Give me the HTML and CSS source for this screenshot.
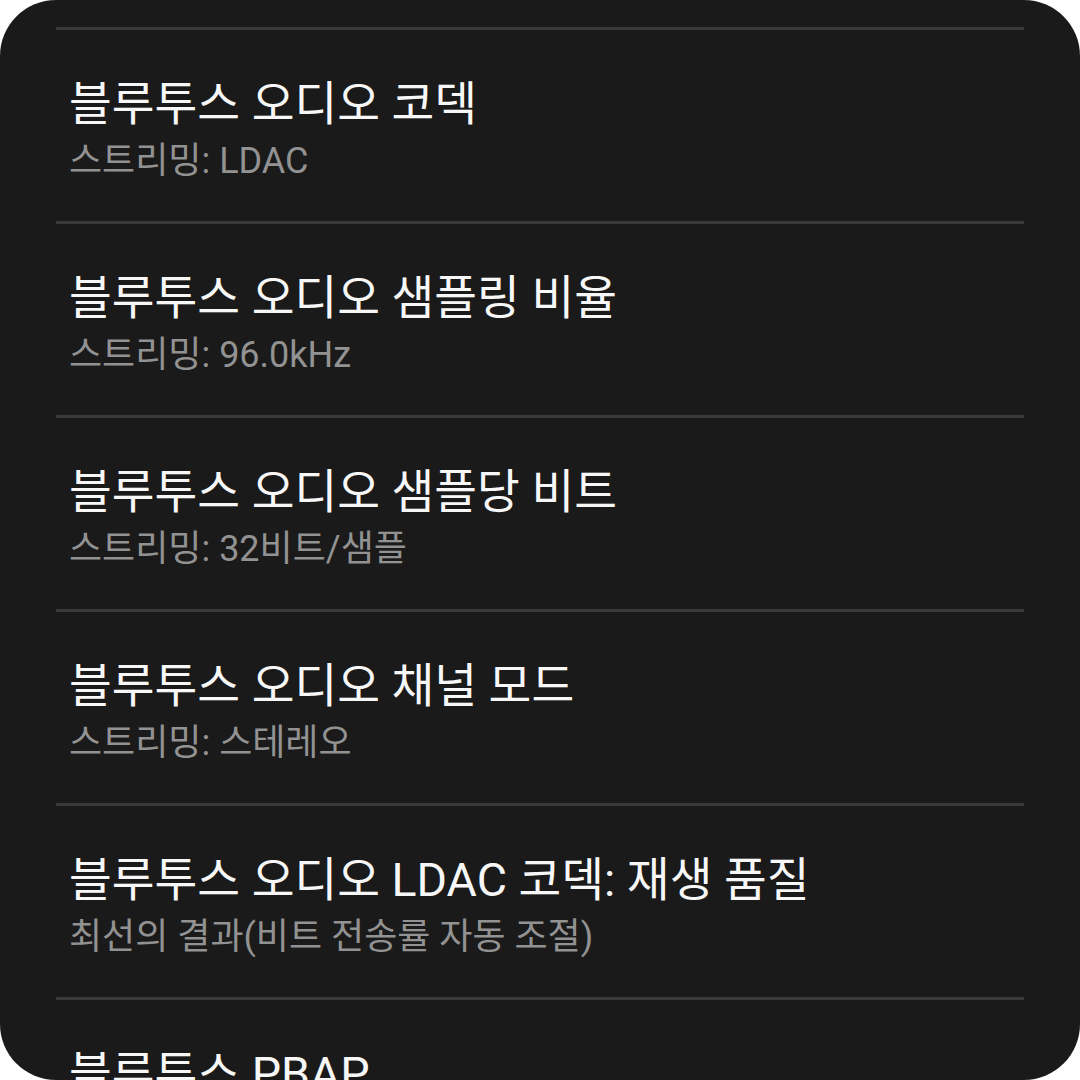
FILE: index.html
```html
<!DOCTYPE html>
<html lang="ko">
<head>
	<meta charset="UTF-8"/>
	<meta name="viewport" content="width=device-width, initial-scale=1.0" />
	<title>개발자 옵션</title>
	<link rel="stylesheet" href="styles.css">
</head>
<body>

<div class="card">
<div class="list">
	<div class="item">
		<div class="title">블루투스 오디오 코덱</div>
		<div class="summary">스트리밍: LDAC</div>
	</div>
	<div class="item">
		<div class="title">블루투스 오디오 샘플링 비율</div>
		<div class="summary">스트리밍: 96.0kHz</div>
	</div>
	<div class="item">
		<div class="title">블루투스 오디오 샘플당 비트</div>
		<div class="summary">스트리밍: 32비트/샘플</div>
	</div>
	<div class="item">
		<div class="title">블루투스 오디오 채널 모드</div>
		<div class="summary">스트리밍: 스테레오</div>
	</div>
	<div class="item">
		<div class="title">블루투스 오디오 LDAC 코덱: 재생 품질</div>
		<div class="summary">최선의 결과(비트 전송률 자동 조절)</div>
	</div>
	<div class="item">
		<div class="title">블루투스 PBAP</div>
		<div class="summary">사용 안함</div>
	</div>
</div>
</div>

</body>
</html>
```

FILE: styles.css
```css
html {
	font-family: Roboto, "Noto Sans CJK KR", sans-serif;
}
body {
	margin: 0;
	padding: 0;
	background: #ffffff;
}
.card {
	width: 1080px;
	height: 1080px;
	background: #1a1a1a;
	border-radius: 56px;
	overflow: hidden;
	box-sizing: border-box;
	padding-top: 27px;
}
.list {
	margin: 0 56px;
}
.item {
	height: 194px;
	box-sizing: border-box;
	border-top: 3px solid #3a3a3a;
	padding: 44px 13px 0;
}
.title {
	color: #f7f7f7;
	font-size: 46.5px;
	line-height: 60px;
}
.summary {
	color: #929292;
	font-size: 36px;
	line-height: 54px;
}
```
